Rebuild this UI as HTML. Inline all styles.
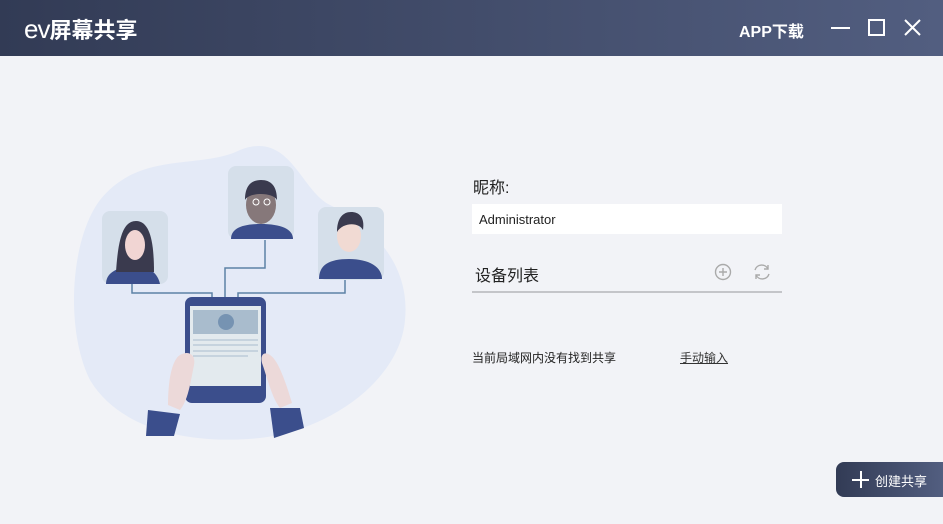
<!DOCTYPE html>
<html><head><meta charset="utf-8"><style>
*{margin:0;padding:0;box-sizing:border-box}
body{width:943px;height:524px;overflow:hidden;background:#f2f3f7;font-family:"Liberation Sans","Noto Sans CJK SC",sans-serif;position:relative}
.top{position:absolute;left:0;top:0;width:943px;height:56px;background:linear-gradient(90deg,#323b55,#525e80)}
.logo{position:absolute;left:24px;top:13px;color:#fff;font-size:22px;font-weight:bold;letter-spacing:0px}
.app{position:absolute;left:739px;top:18px;color:#fff;font-size:16px;font-weight:bold}
.lbl{position:absolute;left:473px;top:174px;font-size:16px;color:#222}
.inp{position:absolute;left:472px;top:204px;width:310px;height:30px;background:#fff;font-size:13px;color:#222;padding:8px 0 0 7px}
.dev{position:absolute;left:475px;top:262px;font-size:16px;color:#222}
.line{position:absolute;left:472px;top:291px;width:310px;height:2px;background:#c4c5c9}
.none{position:absolute;left:472px;top:349px;font-size:12px;color:#222}
.man{position:absolute;left:680px;top:349px;font-size:12px;color:#333;text-decoration:underline}
.btn{position:absolute;left:836px;top:462px;width:107px;height:35px;background:linear-gradient(90deg,#323b55,#525e80);border-radius:8px 0 0 8px;color:#fff;font-size:13px;padding:9px 0 0 39px}
.btn:before{content:"";position:absolute;left:16px;top:17px;width:17px;height:2px;background:#fff}
.btn:after{content:"";position:absolute;left:24px;top:9px;width:2px;height:17px;background:#fff}
</style></head><body>
<div class="top"></div>
<div class="logo"><span style="font-weight:normal;font-size:26px;letter-spacing:-1px">ev</span>屏幕共享</div>
<div class="app">APP下载</div>
<svg style="position:absolute;left:0;top:0" width="943" height="56"><g stroke="#fff" stroke-width="2" fill="none"><path d="M831 28h19"/><rect x="869" y="20" width="15" height="15"/><path d="M905 20l15 15M920 20l-15 15"/></g></svg>
<svg style="position:absolute;left:0;top:0" width="460" height="524">
<path d="M100 200C140 150 200 170 240 150C290 130 300 190 330 205C380 230 410 270 405 320C400 380 330 430 260 438C190 445 120 430 90 380C65 330 70 240 100 200Z" fill="#e4eaf7"/>
<g stroke="#5d82a6" stroke-width="1.5" fill="none"><path d="M132 283v10h80v8M225 300v-32h40v-28M238 300v-7h107v-14"/></g>
<rect x="102" y="211" width="66" height="73" rx="8" fill="#d5dfea"/>
<rect x="228" y="166" width="66" height="73" rx="8" fill="#d5dfea"/>
<rect x="318" y="207" width="66" height="73" rx="8" fill="#d5dfea"/>
<path d="M106 284c0-12 12-17 28-18 16 0 24 8 26 18z" fill="#3b4e8c"/>
<path d="M116 272c2-30 6-51 20-51s18 21 18 51z" fill="#3a3a4e"/>
<ellipse cx="135" cy="245" rx="10" ry="15" fill="#f1d5d3"/>
<path d="M231 239c0-10 10-15 30-15s32 5 32 15z" fill="#3b4e8c"/>
<ellipse cx="261" cy="205" rx="15" ry="19" fill="#86787a"/>
<path d="M245 200c0-14 6-20 16-20s16 6 16 20c-4-8-28-8-32 0z" fill="#3a3a4e"/>
<circle cx="256" cy="202" r="3" fill="none" stroke="#fff"/><circle cx="267" cy="202" r="3" fill="none" stroke="#fff"/>
<path d="M319 279c0-14 10-20 30-20s33 8 33 20z" fill="#3b4e8c"/>
<ellipse cx="349" cy="236" rx="12" ry="16" fill="#f1dad3"/>
<path d="M337 232c0-14 6-20 14-20s14 5 12 18c-4-8-20-8-26 2z" fill="#3a3a4e"/>
<rect x="185" y="297" width="81" height="106" rx="7" fill="#3b4e8c"/>
<rect x="190" y="306" width="71" height="80" fill="#e3eaee"/>
<rect x="193" y="310" width="65" height="24" fill="#a9bccd"/>
<circle cx="226" cy="322" r="8" fill="#7693b2"/>
<g stroke="#a9bccd" stroke-width="1"><path d="M193 340h65M193 345h65M193 351h65M193 356h55"/></g>
<path d="M180 355c-8 5-12 25-12 50l12 5c8-10 10-25 14-45 2-10-5-15-14-10z" fill="#ecd9d9"/>
<path d="M270 355c8 5 15 25 22 48l-12 5c-8-10-12-28-18-45-2-8 2-12 8-8z" fill="#ecd9d9"/>
<path d="M148 410l32 4-6 22h-28z" fill="#3b4e8c"/>
<path d="M270 408l30 0 4 20-30 10z" fill="#3b4e8c"/>
</svg>
<div class="lbl">昵称:</div>
<div class="inp">Administrator</div>
<div class="dev">设备列表</div>
<svg style="position:absolute;left:710px;top:260px" width="70" height="24"><g fill="none" stroke="#aaa" stroke-width="1.4"><circle cx="13" cy="12" r="7.5"/><path d="M13 8v8M9 12h8"/><path d="M45 10a7 7 0 0 1 13-1M59 14a7 7 0 0 1-13 1"/><path d="M58 5v4h-4M46 19v-4h4"/></g></svg>
<div class="line"></div>
<div class="none">当前局域网内没有找到共享</div>
<div class="man">手动输入</div>
<div class="btn">创建共享</div>
</body></html>
